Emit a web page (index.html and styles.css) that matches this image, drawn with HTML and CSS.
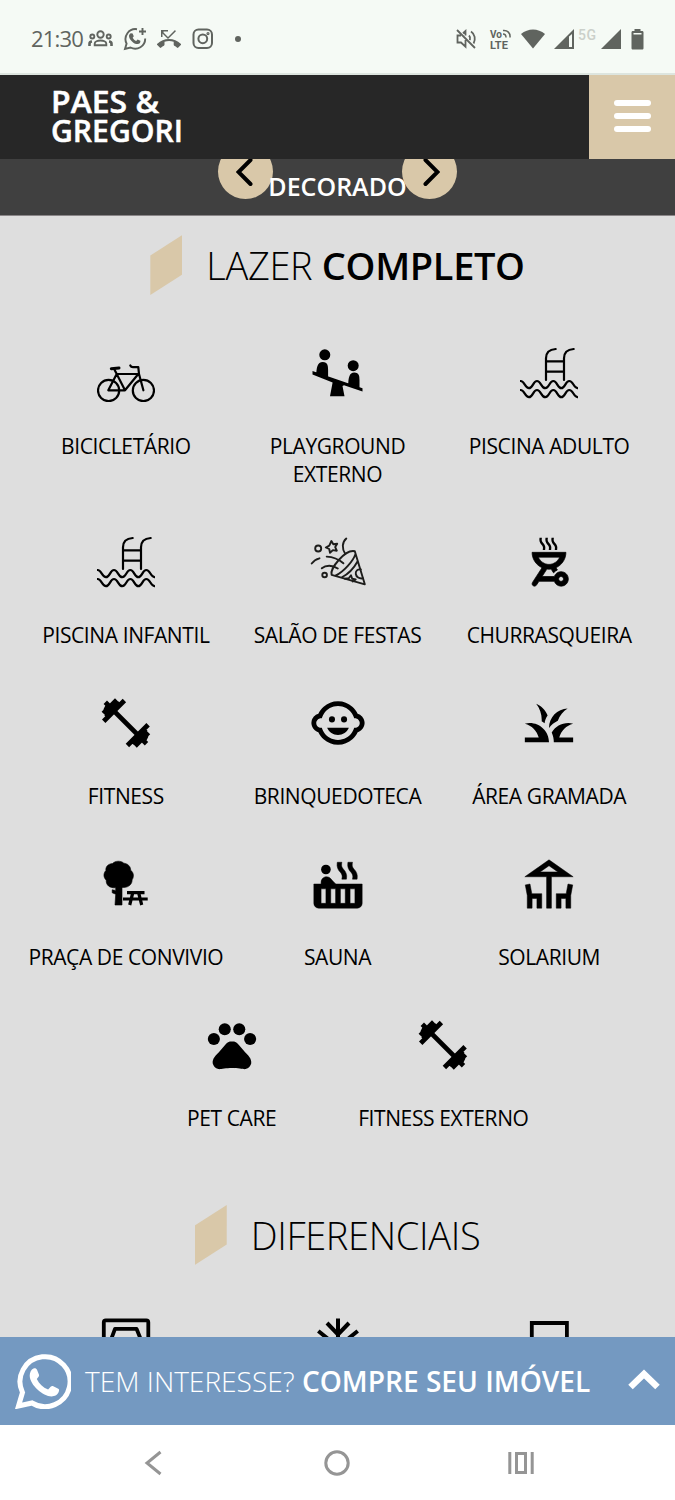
FILE: index.html
```
<!DOCTYPE html>
<html lang="pt-BR">
<head>
    <meta charset="UTF-8">
    <meta name="viewport" content="width=device-width, initial-scale=1.0">
    <title>Paes & Gregori</title>
    <link rel="stylesheet" href="styles.css">
</head>
<body>
    <svg class="sprite" aria-hidden="true">
        <symbol id="ladder" viewBox="0 0 58 58">
            <g fill="none" stroke="#000" stroke-width="2.200" stroke-linecap="round">
                <path d="M35.700 5C29.500 5.400 26 9 26 14.300V36M53.700 5C47.500 5.400 44 9 44 14.300V36M26 17.300h18M26 27.700h18"/>
                <path id="wave" d="M.6 37C4.600 37 5 44.200 9 44.200S13 37 17 37s4.200 7.200 8.300 7.200S29.300 37 33.300 37s4 7.200 8 7.200 4-7.200 8-7.200 4.200 7 8.200 7.200"/>
                <use href="#wave" y="9"/>
            </g>
        </symbol>
        <symbol id="dumbbell" viewBox="0 0 58 58">
            <path d="M16 16l26 26" stroke="#000" stroke-width="4.600"/>
            <g id="weight" stroke="#000" stroke-width="4.800">
                <path d="M27.400 6.500L6.700 27.200M19.700 6L6.300 19.400M8.300 8.300l8 8M23 9L9 23M11.500 10.500l-3 6"/>
            </g>
            <use href="#weight" transform="rotate(180 28.900 29)"/>
        </symbol>
    </svg>

    <div class="status-bar">
        <div class="status-left">
            <span class="time">21:30</span>
            <svg width="25" height="24" viewBox="0 0 25 24" fill="none" stroke="#60645f" stroke-width="1.900">
                <circle cx="12.500" cy="7.500" r="3.200"/><circle cx="4.300" cy="9.500" r="2"/><circle cx="20.700" cy="9.500" r="2"/>
                <path d="M6.700 18.200v-1.500c0-4.200 11.600-4.200 11.600 0v1.500z"/>
                <path d="M4 14.500c-1.800.2-2.500 1-2.500 2.200V19M21 14.500c1.800.2 2.500 1 2.500 2.200V19" stroke-width="2.600"/>
            </svg>
            <svg width="24" height="24" viewBox="0 0 24 24" fill="none" stroke="#60645f" stroke-width="1.900">
                <path d="M14 2.200A10 10 0 0 0 3.600 16.600L2 22l5.500-1.500A10 10 0 0 0 22.200 11.500"/>
                <path d="M19.500 1v7M16 4.500h7"/>
                <path fill="#60645f" stroke="none" d="M8 6.200l1.600.2 1.200 2.800-1.100 1.600c.8 1.600 1.900 2.500 3.500 3.200l1.400-1.500 2.800 1.300c.3 2-1 3.300-2.800 3.300-4 0-8.600-4.800-8.600-8.200C6 7.600 7 6.500 8 6.200z"/>
            </svg>
            <svg width="24" height="24" viewBox="0 0 24 24" fill="#60645f">
                <path d="M6.500 5.500L11 10l7-7 .9 1.200L11 12 5.500 6.500V10H4V3h7v1.500H6.500zM23.700 16.700A17 17 0 0 0 12 12 17 17 0 0 0 .300 16.700a1 1 0 0 0 0 1.400l2.500 2.500c.4.4 1 .4 1.400 0 .8-.7 1.700-1.400 2.700-1.900.3-.1.600-.5.600-.9v-3.100a15 15 0 0 1 9.200 0v3.100c0 .4.200.7.600.9 1 .5 1.900 1.100 2.600 1.900.5.4 1 .4 1.400 0l2.500-2.500a1 1 0 0 0-.1-1.400z"/>
            </svg>
            <svg width="24" height="24" viewBox="0 0 24 24" fill="none" stroke="#60645f" stroke-width="2">
                <rect x="2.500" y="2.500" width="18.500" height="18.500" rx="5"/><circle cx="11.800" cy="11.800" r="4.400"/><circle cx="17" cy="6.600" r=".6"/>
            </svg>
            <span class="dot"></span>
        </div>
        <div class="status-right">
            <svg width="21" height="20" viewBox="0 0 21 20" fill="none" stroke="#60645f" stroke-width="1.800">
                <path d="M1 1l18 18M5 6.500H1.500v7H5l4.500 4.200V11M7 4.200l2.500-2.200v4.500M13 6.500c1 1 1.300 3 .9 4.600M15 2.500c4 2.600 4.800 7.800 2.600 12"/>
            </svg>
            <svg class="volte" width="22" height="20" viewBox="0 0 22 20">
                <g font-family="Roboto, sans-serif" font-weight="700" fill="#60645f">
                    <text x="0" y="8.500" font-size="10" textLength="12">Vo</text>
                    <text x="0" y="19.500" font-size="11" textLength="18">LTE</text>
                </g>
                <path d="M13 5c2 0 3 1.500 3 3.500M13 1.500c4.500-.5 7.500 2.500 7 7" fill="none" stroke="#60645f" stroke-width="1.500"/>
            </svg>
            <svg width="24" height="20" viewBox="0 0 24 20" fill="#60645f"><path d="M0 5c7-6 17-6 24 0L12 19.500z"/></svg>
            <svg width="20" height="20" viewBox="0 0 20 20"><path fill="#60645f" d="M0 20L20 0v20z"/><path fill="#f5faf5" d="M15 7.500l3-2.500v13h-3z"/></svg>
            <span class="net">5G</span>
            <svg width="20" height="20" viewBox="0 0 20 20" fill="#60645f"><path d="M0 20L20 0v20z"/></svg>
            <svg class="battery" width="13" height="21" viewBox="0 0 13 21"><path fill="#60645f" d="M3.500 0h6v2H11c1 0 1.500.5 1.500 1.500V19c0 1-.5 1.500-1.500 1.500H2c-1 0-1.500-.5-1.500-1.500V3.500C.5 2.500 1 2 2 2h1.500z"/><path fill="#f5faf5" d="M2.500 4h8v1.500h-8z"/></svg>
        </div>
    </div>

    <header class="header">
        <svg class="logo" width="134" height="66" viewBox="0 0 134 66">
            <g font-family="'Open Sans', sans-serif" font-weight="600" font-size="31.500" fill="#fff" stroke="#fff" stroke-width=".5">
                <text x="0" y="27.700" textLength="108" lengthAdjust="spacingAndGlyphs">PAES &amp;</text>
                <text x="0" y="56.500" textLength="132" lengthAdjust="spacingAndGlyphs">GREGORI</text>
            </g>
        </svg>
        <button class="menu-btn" aria-label="Menu">
            <span></span>
            <span></span>
            <span></span>
        </button>
    </header>

    <main class="content">
        <div class="slider">
            <span class="arrow arrow-prev"><svg width="20" height="30" viewBox="0 0 20 30"><path d="M14.500 3l-12 12 12 12"/></svg></span>
            <span class="arrow arrow-next"><svg width="20" height="30" viewBox="0 0 20 30"><path d="M5.500 3l12 12-12 12"/></svg></span>
            <span class="slide-title">DECORADO</span>
        </div>

        <section>
            <h2 class="title"><i class="mark"></i><span>LAZER <b>COMPLETO</b></span></h2>
            <ul class="items">
                <li>
                    <svg viewBox="0 0 58 58" fill="none" stroke="#000" stroke-width="2.200" stroke-linecap="round" stroke-linejoin="round">
                        <circle cx="11.600" cy="46.500" r="10.600"/><circle cx="46.400" cy="46.500" r="10.600"/>
                        <path d="M17.300 25.300L28 46.300H11.300L19.700 30h21.600L28 46.300M33.300 21.500c.6 1.500 1.400 1.700 2.700 1.700h5.300l.7 6.800 4.400 16.300"/>
                        <path d="M14.300 24.700l7.700-.8" stroke-width="3"/>
                    </svg>
                    <p>BICICLETÁRIO</p>
                </li>
                <li>
                    <svg viewBox="1 0 58 58">
                        <circle cx="16.800" cy="10.800" r="5.500"/><circle cx="45.200" cy="21.700" r="5.500"/>
                        <path d="M8.300 32c0-8 1-14 6.500-14 5 0 5.300 4 5.300 8v9.500zM40.300 41c0-7 1-12.500 6-12.500s5.200 4 5.200 7.500V46zM4.500 27l50 17.300v3.200L36 41.300 34.500 42l2 10.200H22l2.600-13.700L4.500 30.500z"/>
                    </svg>
                    <p>PLAYGROUND EXTERNO</p>
                </li>
                <li><svg><use href="#ladder"/></svg><p>PISCINA ADULTO</p></li>
                <li><svg><use href="#ladder"/></svg><p>PISCINA INFANTIL</p></li>
                <li>
                    <svg viewBox="0 0 58 58" fill="none" stroke="#1d1d1b" stroke-width="1.900" stroke-linecap="round" stroke-linejoin="round">
                        <circle cx="9.200" cy="15.500" r="3"/><circle cx="15.600" cy="42" r="2.300"/>
                        <path d="M22.400 8l1.900 3.300 3.900-.5-2 3.300 1.600 3.600-3.900-.6-2.900 2.700-.8-3.800-3.400-1.500 3.500-1.900z"/>
                        <path d="M2.700 30.500c1.800-2.500 4.600-4.400 7.800-5.200M17.700 23.600c6.300.2 12.100 2.700 16.700 6.700M12.800 35.300c4.200-3.500 10.500-3.500 16 .2M37.300 5.500c-4.300 3.700-4.600 10-1 15.500"/>
                        <path d="M45.800 18.200L55.800 51.300 22.600 41.800C20.500 36 36 16 45.800 18.200zM46.300 21.500C44.500 27 36 38 26.500 42.700M48.500 28.500C45 35 39.500 41 32.500 44.500"/>
                        <path d="M51.800 36.500c-3.200-.5-5.500 1.300-5 4.500.4 2.800 3.500 5 7 4.300M36 45.700l3.800-.4 2.200-3 1.200 3.400 3.500.8-3 2"/>
                    </svg>
                    <p>SALÃO DE FESTAS</p>
                </li>
                <li>
                    <svg viewBox="0 0 24 24">
                        <path fill-rule="evenodd" d="M17 22c1.660 0 3-1.340 3-3s-1.340-3-3-3c-1.300 0-2.400.84-2.820 2H9.140l1.990-3.060c.29.04.58.06.87.06s.58-.02.87-.06l1.020 1.570c.42-.53.96-.95 1.600-1.210l-.6-.93C17.310 13.270 19 10.840 19 8H5c0 2.840 1.690 5.270 4.120 6.370l-3.950 6.080c-.3.46-.17 1.080.29 1.380s1.080.17 1.380-.29l1-1.550h6.340C14.600 21.160 15.700 22 17 22zm0-4c.55 0 1 .45 1 1s-.45 1-1 1-1-.45-1-1 .45-1 1-1zM7.580 10h8.840c-.77 1.760-2.540 3-4.420 3s-3.650-1.240-4.420-3z" stroke="#000" stroke-width=".3"/>
                        <path id="smoke" d="M9.410 7h1c.15-1.150.23-1.640-.89-2.960C9.100 3.540 8.840 3.270 9.060 2h-.99c-.21 1.110.03 2.050.89 2.960.22.240.79.670.45 2.040z"/>
                        <use href="#smoke" x="2.480"/><use href="#smoke" x="4.960"/>
                    </svg>
                    <p>CHURRASQUEIRA</p>
                </li>
                <li><svg><use href="#dumbbell"/></svg><p>FITNESS</p></li>
                <li>
                    <svg viewBox="0 0 24 24">
                        <circle cx="14.500" cy="10.500" r="1.250"/><circle cx="9.500" cy="10.500" r="1.250"/>
                        <path fill-rule="evenodd" d="M22.940 12.660c.04-.21.06-.43.06-.66s-.02-.45-.06-.66c-.25-1.510-1.360-2.740-2.810-3.170-.53-1.120-1.280-2.100-2.190-2.910C16.360 3.850 14.280 3 12 3s-4.360.85-5.940 2.260c-.92.81-1.670 1.800-2.190 2.910-1.450.43-2.560 1.650-2.810 3.170-.04.21-.06.43-.06.66s.02.45.06.66c.25 1.510 1.360 2.740 2.810 3.170.52 1.110 1.270 2.090 2.170 2.890C7.620 20.140 9.710 21 12 21s4.380-.86 5.970-2.280c.9-.8 1.650-1.790 2.170-2.890 1.440-.43 2.550-1.650 2.800-3.170zM19 14c-.1 0-.19-.02-.29-.03-.2.67-.49 1.290-.86 1.860C16.600 17.740 14.450 19 12 19s-4.600-1.260-5.850-3.170c-.37-.57-.66-1.190-.86-1.860-.1.010-.19.030-.29.030-1.100 0-2-.9-2-2s.9-2 2-2c.1 0 .19.020.29.030.2-.67.49-1.290.86-1.860C7.400 6.260 9.550 5 12 5s4.600 1.260 5.850 3.170c.37.57.66 1.190.86 1.860.1-.01.19-.03.29-.03 1.100 0 2 .9 2 2s-.9 2-2 2zM7.500 14c.76 1.770 2.490 3 4.500 3s3.740-1.230 4.500-3h-9z"/>
                    </svg>
                    <p>BRINQUEDOTECA</p>
                </li>
                <li>
                    <svg viewBox="0 0 24 24"><path d="M12 20H2v-2h5.750C7.020 15.190 4.810 12.990 2 12.260 2.640 12.100 3.310 12 4 12c4.420 0 8 3.580 8 8zm10-7.740c-.64-.16-1.310-.26-2-.26-2.930 0-5.480 1.580-6.880 3.930.29.66.53 1.350.67 2.070.13.65.2 1.320.2 2h8v-2h-5.750c.74-2.810 2.950-5.010 5.760-5.740zm-6.360-1.240c.78-2.090 2.230-3.840 4.090-5C15.440 6.160 12 9.670 12 14v.02c.95-1.270 2.200-2.300 3.640-3zm-4.220-2.170C10.580 6.660 8.880 4.890 6.700 4 8.140 5.860 9 8.180 9 10.710c0 .21-.03.41-.04.61.43.24.83.52 1.220.82.11-1.200.55-2.340 1.240-3.290z"/></svg>
                    <p>ÁREA GRAMADA</p>
                </li>
                <li>
                    <svg viewBox="0 0 58 58">
                        <path d="M15.500 8.500c3-3 8.500-3 11.300-.3 3.800.2 7 3.300 6.900 7 3.400 2.600 3.300 7 1.400 9.600.2 4.200-3.300 7.700-8.600 7.700H25V50h-7l.7-10.800-3.500-1.400v-3l3.500.6v-2.600c-6.200.4-9.700-2.600-9.500-7.600-3-3-2.900-7-.3-9.700C8.400 11.500 11.500 8.800 15.500 8.500z" stroke="#000" stroke-width=".6"/>
                        <path d="M30 37.700h17.500M26 44h24.700M35.700 38l-3 12M41.700 38l3 12" fill="none" stroke="#000" stroke-width="3.200"/>
                    </svg>
                    <p>PRAÇA DE CONVIVIO</p>
                </li>
                <li>
                    <svg viewBox="0 0 24 24">
                        <circle cx="7" cy="6" r="2"/>
                        <path fill-rule="evenodd" d="M11.150 12c-.31-.22-.59-.46-.82-.72l-1.400-1.550c-.19-.21-.43-.38-.69-.5-.29-.14-.62-.23-.96-.23h-.03C6.010 9 5 10.010 5 11.250V12H2v8c0 1.100.9 2 2 2h16c1.100 0 2-.9 2-2v-8H11.150zM7 20H5v-6h2v6zm4 0H9v-6h2v6zm4 0h-2v-6h2v6zm4 0h-2v-6h2v6z" stroke="#000" stroke-width=".2"/>
                        <path id="steam" d="M18.650 5.860l-.07-.07c-.57-.62-.82-1.410-.67-2.200L18 3h-1.890l-.06.430c-.2 1.360.27 2.710 1.300 3.720l.07.06c.57.62.82 1.410.67 2.200l-.11.59h1.910l.06-.43c.21-1.360-.27-2.710-1.300-3.710z" stroke="#000" stroke-width=".2"/>
                        <use href="#steam" x="-4.400"/>
                    </svg>
                    <p>SAUNA</p>
                </li>
                <li>
                    <svg viewBox="0 0 24 24"><path fill-rule="evenodd" d="M22 9L12 2 2 9h9v13h2V9h9zM12 4.440L15.660 7H8.340L12 4.440zM4.140 12l-1.960.37.82 4.370V22h2l.02-4H7v4h2v-6H4.900l-.76-4zM19.100 16H15v6h2v-4h1.980l.02 4h2v-5.260l.82-4.370-1.960-.37-.76 4z" stroke="#000" stroke-width=".2"/></svg>
                    <p>SOLARIUM</p>
                </li>
                <li>
                    <svg viewBox="0 0 24 24">
                        <circle cx="4.500" cy="9.500" r="2.500"/><circle cx="9" cy="5.500" r="2.500"/><circle cx="15" cy="5.500" r="2.500"/><circle cx="19.500" cy="9.500" r="2.500"/>
                        <path d="M17.340 14.860c-.87-1.020-1.600-1.890-2.480-2.910-.46-.54-1.050-1.080-1.750-1.320-.11-.04-.22-.07-.33-.09-.25-.04-.52-.04-.78-.04s-.53 0-.79.05c-.11.02-.22.05-.33.09-.7.24-1.280.78-1.750 1.320-.87 1.020-1.600 1.890-2.480 2.910-1.310 1.310-2.920 2.760-2.620 4.790.29 1.020 1.020 2.030 2.330 2.320.73.15 3.060-.44 5.540-.44h.18c2.480 0 4.810.58 5.540.44 1.310-.29 2.040-1.310 2.330-2.320.31-2.040-1.300-3.490-2.610-4.800z"/>
                    </svg>
                    <p>PET CARE</p>
                </li>
                <li><svg><use href="#dumbbell"/></svg><p>FITNESS EXTERNO</p></li>
            </ul>
        </section>

        <section>
            <h2 class="title title-second"><i class="mark"></i><span>DIFERENCIAIS</span></h2>
            <ul class="items">
                <li>
                    <svg viewBox="0 0 58 58" fill="none" stroke="#000" stroke-width="3.800" stroke-linejoin="round">
                        <rect x="6.800" y="6.300" width="44.500" height="46" rx="2"/><path d="M13.500 27l4.500-12.200h21.500L44.500 27v16h-31z"/>
                    </svg>
                </li>
                <li>
                    <svg viewBox="0 0 58 58" fill="none" stroke="#000" stroke-width="4"><path d="M29 4.500v49M18 9l11 11.500L40 9M9.300 17l10.500 8.500M48.700 17l-10.500 8.500"/></svg>
                </li>
                <li>
                    <svg viewBox="0 0 58 58" fill="none" stroke="#000" stroke-width="3.800"><path d="M11.800 52V9h35.100v43z"/></svg>
                </li>
            </ul>
        </section>
    </main>

    <div class="contact-bar">
        <svg width="56" height="56" viewBox="0 0 56 56">
            <path d="M3.500 53l4-13.500A25 25 0 1 1 17 50z" fill="none" stroke="#fff" stroke-width="5"/>
            <path fill="#fff" d="M18.500 15.500c1.700-.4 3 0 3.600 1.500l1.900 4.800c.4 1-.3 2-2.200 4.200 2.500 5 6 8.300 11.300 10.600 2.700-3.400 3.500-4 4.700-3.600l5 2.400c1.400.7 1.500 1.300 1.100 2.900-.9 3.400-4.300 5.200-7.300 5.200-8.600 0-21.700-11.500-21.900-20.700 0-3.300 1.500-6.300 3.800-7.300z"/>
        </svg>
        <span class="contact-text">TEM INTERESSE? <b>COMPRE SEU IMÓVEL</b></span>
        <svg class="chevron" width="32" height="24" viewBox="0 0 32 24"><path d="M2.500 18L16 5l13.500 13" fill="none" stroke="#fff" stroke-width="6.500"/></svg>
    </div>

    <nav class="nav-bar">
        <svg width="26" height="26" viewBox="0 0 26 26"><path d="M20.500 2L7 13l13.500 11"/></svg>
        <svg width="26" height="26" viewBox="0 0 26 26"><circle cx="13" cy="13" r="11.200"/></svg>
        <svg width="26" height="26" viewBox="0 0 26 26"><path d="M1.800 2v22M24.200 2v22M8.500 3.500h9v19h-9z"/></svg>
    </nav>
</body>
</html>
```
FILE: styles.css
```
* {
    box-sizing: border-box;
    margin: 0;
    padding: 0;
}

body {
    width: 675px;
    height: 1500px;
    display: flex;
    flex-direction: column;
    overflow: hidden;
    font-family: 'Open Sans', sans-serif;
    background: #fff;
    color: #000;
}

.sprite {
    display: none;
}

/* status bar */
.status-bar {
    height: 75px;
    flex-shrink: 0;
    display: flex;
    justify-content: space-between;
    padding: 5px 31px 0 31px;
    background: #f5faf5;
    border-bottom: 2px solid #dde5df;
    color: #60645f;
}

.status-left,
.status-right {
    display: flex;
    align-items: center;
}

.status-left svg {
    margin-right: 10px;
}

.time {
    width: 57px;
    margin-top: -2px;
    font-size: 22px;
    letter-spacing: -0.8px;
}

.status-left .dot {
    width: 6px;
    height: 6px;
    margin-left: 10px;
    border-radius: 50%;
    background: #60645f;
}

.status-right svg {
    margin-right: 9px;
}

.status-right svg:first-child {
    margin-right: 13px;
}

.status-right .volte {
    overflow: visible;
}

.net {
    width: 23px;
    margin: -8px 0 0 -5px;
    font-family: Roboto, sans-serif;
    font-size: 14px;
    font-weight: 500;
    letter-spacing: 0.5px;
    color: #cbd0ca;
}

.status-right .battery {
    margin: 0 0 0 1px;
}

/* header */
.header {
    height: 84px;
    flex-shrink: 0;
    display: flex;
    justify-content: space-between;
    background: #272727;
}

.logo {
    margin: 10px 0 0 51px;
    overflow: visible;
}

.menu-btn {
    width: 86px;
    height: 84px;
    display: flex;
    flex-direction: column;
    align-items: center;
    justify-content: center;
    gap: 7px;
    padding-bottom: 2px;
    border: 0;
    background: #d9c8a9;
}

.menu-btn span {
    width: 37px;
    height: 6px;
    border-radius: 3px;
    background: #fff;
}

/* content */
.content {
    flex: 1;
    min-height: 0;
    overflow: hidden;
    background: #dedede;
}

.slider {
    position: relative;
    height: 57px;
    overflow: hidden;
    text-align: center;
    background: #404040;
    border-bottom: 1px solid #8a8688;
}

.slide-title {
    position: relative;
    line-height: 54px;
    font-size: 25px;
    font-weight: 600;
    color: #fff;
}

.arrow {
    position: absolute;
    top: -15px;
    width: 55px;
    height: 55px;
    display: flex;
    align-items: center;
    justify-content: center;
    border-radius: 50%;
    background: #d9c8a9;
}

.arrow-prev {
    left: 218px;
}

.arrow-next {
    left: 402px;
}

.arrow path {
    fill: none;
    stroke: #000;
    stroke-width: 4;
    stroke-linecap: round;
}

.title {
    display: flex;
    align-items: center;
    justify-content: center;
    gap: 24px;
    height: 60px;
    margin-top: 19px;
    font-size: 38px;
    font-weight: 300;
    letter-spacing: -0.35px;
}

.title b,
.contact-text b {
    font-weight: 600;
}

.title-second {
    margin-top: 28px;
}

.mark {
    width: 32px;
    height: 60px;
    background: #d9c8a9;
    clip-path: polygon(0 34%, 100% 0, 100% 66%, 0 100%);
}

.items {
    display: flex;
    flex-wrap: wrap;
    justify-content: center;
    padding: 49px 20px 0;
    list-style: none;
}

.items li {
    width: 33.333%;
    padding-bottom: 45px;
    text-align: center;
}

.items svg {
    display: block;
    width: 58px;
    height: 58px;
    margin: 0 auto;
}

.items p {
    margin: 30px auto 0;
    max-width: 200px;
    font-size: 21px;
    line-height: 28px;
    letter-spacing: -0.4px;
}

/* contact */
.contact-bar {
    height: 88px;
    flex-shrink: 0;
    display: flex;
    align-items: center;
    padding: 0 15px;
    background: #7499c1;
    color: #fff;
}

.contact-text {
    margin-left: 14px;
    font-size: 28.1px;
    font-weight: 300;
    white-space: nowrap;
}

.chevron {
    margin-left: auto;
}

/* android buttons */
.nav-bar {
    height: 75px;
    flex-shrink: 0;
    display: flex;
    align-items: center;
    justify-content: center;
    gap: 158px;
    padding-right: 1px;
    background: #fff;
}

.nav-bar svg {
    fill: none;
    stroke: #959595;
    stroke-width: 3;
}
```
